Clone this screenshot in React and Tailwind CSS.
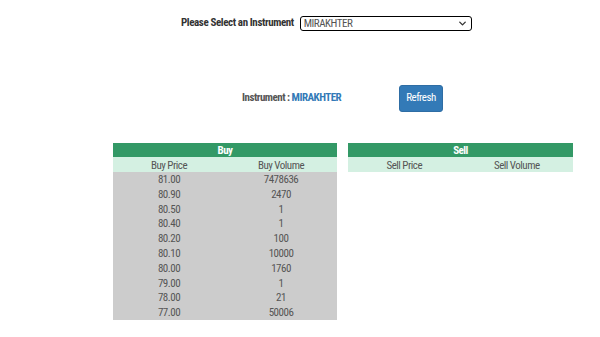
import { ChevronDown } from 'lucide-react'

const buys = [
  ['81.00', '7478636'],
  ['80.90', '2470'],
  ['80.50', '1'],
  ['80.40', '1'],
  ['80.20', '100'],
  ['80.10', '10000'],
  ['80.00', '1760'],
  ['79.00', '1'],
  ['78.00', '21'],
  ['77.00', '50006'],
]

function BookTable({ title, cols, rows, width }) {
  return (
    <div className={width}>
      <div className="h-[14px] bg-[#339966] text-white font-bold text-[11px] leading-[15px] text-center">
        {title}
      </div>
      <div className="grid grid-cols-2 h-[15px] bg-[#d4f0e2] text-[#555] text-[11px] leading-[17px] text-center">
        <div>{cols[0]}</div>
        <div>{cols[1]}</div>
      </div>
      {rows.map((r, i) => (
        <div key={i} className="grid grid-cols-2 h-[14.8px] bg-[#cccccc] text-[#555] text-[11px] leading-[16px] text-center">
          <div>{r[0]}</div>
          <div>{r[1]}</div>
        </div>
      ))}
    </div>
  )
}

export default function App() {
  return (
    <div
      className="w-[600px] h-[337px] bg-white overflow-hidden tracking-[-0.5px]"
      style={{ fontFamily: '"Liberation Sans Narrow", "Roboto Condensed", "Liberation Sans", sans-serif' }}
    >
      <div className="flex items-center pt-[16px] pl-[181px] h-[31px]">
        <span className="text-[11px] text-[#333] font-bold mr-[6px] tracking-[-0.4px]">Please Select an Instrument</span>
        <div className="w-[172px] h-[15px] border border-black rounded-[3px] flex items-center justify-between px-[3px]">
          <span className="text-[11px] text-[#555] leading-none">MIRAKHTER</span>
          <ChevronDown size={11} strokeWidth={3} className="text-[#333]" />
        </div>
      </div>
      <div className="flex items-center mt-[54px] h-[27px]">
        <div className="pl-[242px] w-[399px] text-[11px]">
          <span className="text-[#555] font-bold">Instrument : </span>
          <span className="text-[#337ab7] font-bold">MIRAKHTER</span>
        </div>
        <button className="w-[44px] h-[27px] bg-[#337ab7] border border-[#2e6da4] rounded-[3px] text-white text-[11px]">
          Refresh
        </button>
      </div>
      <div className="flex gap-[11px] pl-[113px] mt-[31px]">
        <BookTable width="w-[224px]" title="Buy" cols={['Buy Price', 'Buy Volume']} rows={buys} />
        <BookTable width="w-[225px]" title="Sell" cols={['Sell Price', 'Sell Volume']} rows={[]} />
      </div>
    </div>
  )
}
